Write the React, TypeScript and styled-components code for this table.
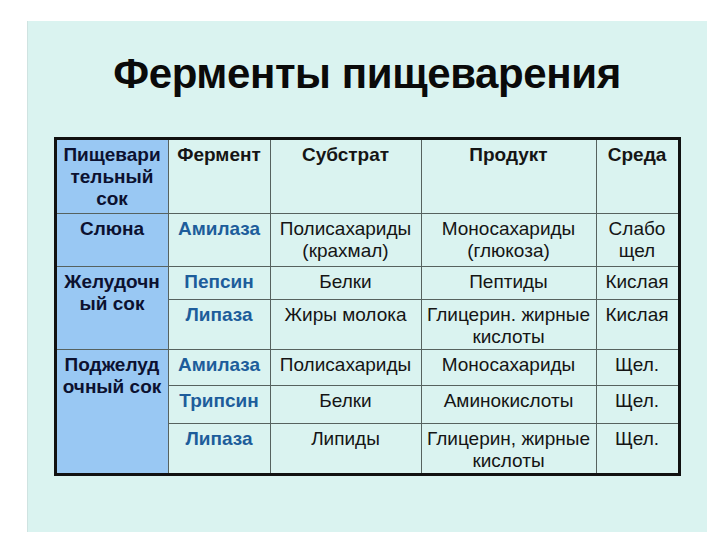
import React from "react";
import styled, { createGlobalStyle } from "styled-components";

const Global = createGlobalStyle`
  html, body { margin: 0; padding: 0; background: #ffffff; }
  body { font-family: "Liberation Sans", Arial, sans-serif; }
`;

const Page = styled.div`
  width: 720px;
  height: 540px;
  padding: 21px 0 0 27px;
  box-sizing: border-box;
`;

const Slide = styled.section`
  width: 680px;
  height: 511px;
  background: #daf3f0;
  box-shadow: inset 1px 0 0 #cfe3e1;
  display: flex;
  flex-direction: column;
  align-items: center;
`;

const Title = styled.h1`
  margin: 28px 0 38px;
  font-family: "Liberation Sans", Arial, sans-serif;
  font-size: 42px;
  line-height: 50px;
  font-weight: 700;
  letter-spacing: -0.4px;
  color: #0a0a0a;
`;

const Table = styled.table`
  width: 624px;
  table-layout: fixed;
  border-collapse: collapse;
  border: 3px solid #111111;
  font-family: "Liberation Sans", Arial, sans-serif;
  font-size: 19px;
  line-height: 22px;
  color: #151515;
`;

const Row = styled.tr<{ $h: number }>`
  height: ${(p) => p.$h}px;
`;

const Cell = styled.td<{ $kind?: "juice" | "enzyme" | "head" | "plain" }>`
  border: 1px solid #56625f;
  vertical-align: top;
  text-align: center;
  padding: 4px 2px 0;
  background: ${(p) => (p.$kind === "juice" ? "#99c8f3" : "transparent")};
  font-weight: ${(p) => (p.$kind && p.$kind !== "plain" ? 700 : 400)};
  color: ${(p) =>
    p.$kind === "enzyme" ? "#1d5d9b" : p.$kind === "juice" ? "#0c1130" : "#151515"};
`;

type Sub = { enzyme: string; substrate: string[]; product: string[]; medium: string[]; h: number };
type Group = { juice: string[]; rows: Sub[] };

const groups: Group[] = [
  {
    juice: ["Слюна"],
    rows: [
      {
        enzyme: "Амилаза",
        substrate: ["Полисахариды", "(крахмал)"],
        product: ["Моносахариды", "(глюкоза)"],
        medium: ["Слабо", "щел"],
        h: 53,
      },
    ],
  },
  {
    juice: ["Желудочн", "ый сок"],
    rows: [
      { enzyme: "Пепсин", substrate: ["Белки"], product: ["Пептиды"], medium: ["Кислая"], h: 33 },
      {
        enzyme: "Липаза",
        substrate: ["Жиры молока"],
        product: ["Глицерин. жирные", "кислоты"],
        medium: ["Кислая"],
        h: 50,
      },
    ],
  },
  {
    juice: ["Поджелуд", "очный сок"],
    rows: [
      { enzyme: "Амилаза", substrate: ["Полисахариды"], product: ["Моносахариды"], medium: ["Щел."], h: 36 },
      { enzyme: "Трипсин", substrate: ["Белки"], product: ["Аминокислоты"], medium: ["Щел."], h: 38 },
      {
        enzyme: "Липаза",
        substrate: ["Липиды"],
        product: ["Глицерин, жирные", "кислоты"],
        medium: ["Щел."],
        h: 51,
      },
    ],
  },
];

const Lines = ({ items }: { items: string[] }) => (
  <>
    {items.map((t, i) => (
      <React.Fragment key={i}>
        {i > 0 && <br />}
        {t}
      </React.Fragment>
    ))}
  </>
);

export default function App() {
  return (
    <>
      <Global />
      <Page>
        <Slide>
          <Title>Ферменты пищеварения</Title>
          <Table>
            <colgroup>
              <col style={{ width: 113 }} />
              <col style={{ width: 102 }} />
              <col style={{ width: 151 }} />
              <col style={{ width: 175 }} />
              <col style={{ width: 83 }} />
            </colgroup>
            <tbody>
              <Row $h={75}>
                <Cell $kind="juice">
                  <Lines items={["Пищевари", "тельный", "сок"]} />
                </Cell>
                <Cell $kind="head">Фермент</Cell>
                <Cell $kind="head">Субстрат</Cell>
                <Cell $kind="head">Продукт</Cell>
                <Cell $kind="head">Среда</Cell>
              </Row>
              {groups.map((g, gi) =>
                g.rows.map((r, ri) => (
                  <Row $h={r.h} key={`${gi}-${ri}`}>
                    {ri === 0 && (
                      <Cell $kind="juice" rowSpan={g.rows.length}>
                        <Lines items={g.juice} />
                      </Cell>
                    )}
                    <Cell $kind="enzyme">{r.enzyme}</Cell>
                    <Cell $kind="plain">
                      <Lines items={r.substrate} />
                    </Cell>
                    <Cell $kind="plain">
                      <Lines items={r.product} />
                    </Cell>
                    <Cell $kind="plain">
                      <Lines items={r.medium} />
                    </Cell>
                  </Row>
                ))
              )}
            </tbody>
          </Table>
        </Slide>
      </Page>
    </>
  );
}
